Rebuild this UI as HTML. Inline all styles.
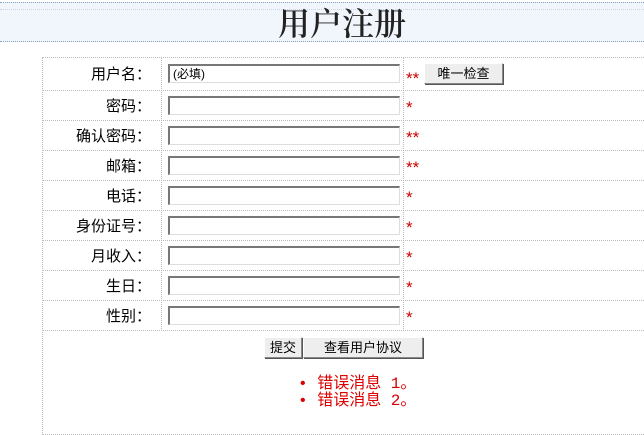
<!DOCTYPE html>
<html><head><meta charset="utf-8"><style>
body{margin:0;width:644px;height:434px;background:#fff;position:relative;overflow:hidden;font-family:"Liberation Sans","Noto Sans CJK SC","WenQuanYi Zen Hei",sans-serif;font-size:14px;color:#000}
.hdr{position:absolute;left:0;top:2px;width:644px;height:38px;background:#f1f6fc;border-top:1px dotted #8aa0c0;border-bottom:1px dotted #8aa0c0}
.hdr div{position:absolute;left:0;right:0;top:6px;height:1px;border-top:1px dotted #c8d4e4}
.title{position:absolute;left:278px;width:140px;top:2px;font-family:"Noto Serif CJK SC",serif;font-size:32px;font-weight:600;color:#222;line-height:40px;white-space:nowrap}
.tbl{position:absolute;left:42px;top:57px;width:610px;height:376px;border:1px dotted #bbb}
.h{position:absolute;left:42px;width:602px;border-top:1px dotted #bbb}
.v{position:absolute;top:57px;height:274px;border-left:1px dotted #bbb}
.lab{position:absolute;left:40px;width:111px;text-align:right;line-height:20px;font-size:15px}
.inp{position:absolute;left:168px;width:226px;height:16px;border-top:2px solid #777;border-left:2px solid #777;border-right:1px solid #ddd;border-bottom:1px solid #ddd;background:#fff;font-size:12px;line-height:16px;padding-left:3px;box-sizing:content-box}
.st{position:absolute;left:406px;color:#c00;font-size:17px;line-height:20px}
.btn{position:absolute;background:#eee;border:1px solid #888;border-top-color:#fff;border-left-color:#fff;box-shadow:1px 1px 0 #555;text-align:center;font-size:13px;line-height:19px}
.err{position:absolute;left:298px;color:#d00;font-size:16px;line-height:17px;font-family:"Liberation Mono","Noto Sans CJK SC",monospace;white-space:nowrap}
</style></head><body>
<div class="hdr"><div></div></div>
<div class="title">用户注册</div>
<div class="tbl"></div>
<div class="h" style="top:90px"></div><div class="h" style="top:120px"></div><div class="h" style="top:150px"></div><div class="h" style="top:180px"></div><div class="h" style="top:210px"></div><div class="h" style="top:240px"></div><div class="h" style="top:270px"></div><div class="h" style="top:300px"></div><div class="h" style="top:330px"></div>
<div class="v" style="left:161px"></div><div class="v" style="left:403px"></div>

<div class="lab" style="top:65px">用户名：</div><div class="inp" style="top:64px">(必填)</div><div class="st" style="top:69px">**</div>
<div class="btn" style="left:424px;top:63px;width:77px;height:19px">唯一检查</div>
<div class="lab" style="top:97px">密码：</div><div class="inp" style="top:96px"></div><div class="st" style="top:98px">*</div>
<div class="lab" style="top:127px">确认密码：</div><div class="inp" style="top:126px"></div><div class="st" style="top:128px">**</div>
<div class="lab" style="top:157px">邮箱：</div><div class="inp" style="top:156px"></div><div class="st" style="top:158px">**</div>
<div class="lab" style="top:187px">电话：</div><div class="inp" style="top:186px"></div><div class="st" style="top:188px">*</div>
<div class="lab" style="top:217px">身份证号：</div><div class="inp" style="top:216px"></div><div class="st" style="top:218px">*</div>
<div class="lab" style="top:247px">月收入：</div><div class="inp" style="top:246px"></div><div class="st" style="top:248px">*</div>
<div class="lab" style="top:277px">生日：</div><div class="inp" style="top:276px"></div><div class="st" style="top:278px">*</div>
<div class="lab" style="top:307px">性别：</div><div class="inp" style="top:306px"></div><div class="st" style="top:308px">*</div>

<div class="btn" style="left:264px;top:337px;width:36px;height:19px">提交</div>
<div class="btn" style="left:303px;top:337px;width:118px;height:19px">查看用户协议</div>
<div class="err" style="top:376px">•&nbsp;错误消息 1。</div>
<div class="err" style="top:393px">•&nbsp;错误消息 2。</div>
</body></html>
